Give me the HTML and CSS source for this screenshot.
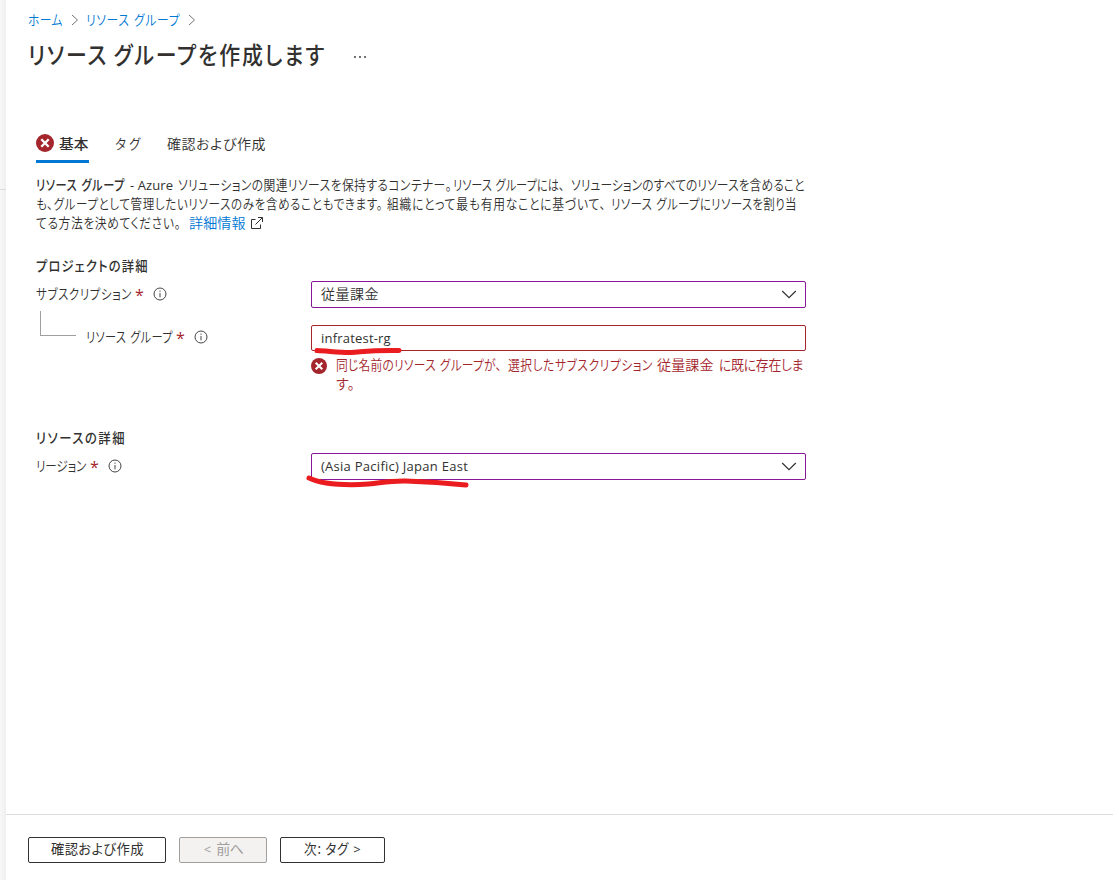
FILE: index.html
```
<!DOCTYPE html>
<html lang="ja">
<head>
<meta charset="utf-8">
<title>リソース グループを作成します</title>
<link rel="stylesheet" href="styles.css">
</head>
<body>
<div class="app">
  <aside class="rail"></aside>
  <div class="blade">
    <header class="head">
      <nav class="crumbs">
        <a class="seg c-home">ホーム</a>
        <svg class="crumb-arrow" width="8" height="12" viewBox="0 0 8 12"><path d="M1 1l5.500 5L1 11"/></svg>
        <a class="seg c-rg">リソース グループ</a>
        <svg class="crumb-arrow" width="8" height="12" viewBox="0 0 8 12"><path d="M1 1l5.500 5L1 11"/></svg>
      </nav>
      <div class="title-row">
        <h1 class="seg c-title">リソース グループを作成します</h1>
        <svg class="more" width="14" height="4" viewBox="0 0 14 4"><circle cx="2" cy="2" r=".9"/><circle cx="7" cy="2" r=".9"/><circle cx="12" cy="2" r=".9"/></svg>
      </div>
    </header>

    <main class="content">
      <div class="tabs">
        <div class="tab active">
          <svg class="err" width="18" height="18" viewBox="0 0 18 18"><circle cx="9" cy="9" r="9"/><path d="M5.300 5.300l7.400 7.400M12.700 5.300l-7.400 7.400"/></svg>
          <span class="seg c-basic">基本</span>
        </div>
        <div class="tab"><span class="seg c-tag">タグ</span></div>
        <div class="tab"><span class="seg c-review">確認および作成</span></div>
      </div>

      <div class="desc">
        <div class="line"><b class="seg d-1">リソース グループ</b><span class="latin d-azure">- Azure</span><span class="seg d-2">ソリューションの関連リソースを保持するコンテナー。</span><span class="seg d-3">リソース グループには、</span><span class="seg d-4">ソリューションのすべてのリソースを含めること</span></div>
        <div class="line"><span class="seg d-5">も、グループとして管理したいリソースのみを含めることもできます。</span><span class="seg d-6">組織にとって最も有用なことに基づいて、</span><span class="seg d-7">リソース グループにリソースを割り当</span></div>
        <div class="line"><span class="seg d-8">てる方法を決めてください。</span><a class="seg d-9">詳細情報</a><svg class="ext" width="13" height="13" viewBox="0 0 13 13"><path d="M5.500 2.500h-4v9h9v-4M8 .5h4.500V5M12.300.7L5.500 7.500"/></svg></div>
      </div>

      <h2 class="section"><span class="seg s-project">プロジェクトの詳細</span></h2>
      <div class="row">
        <div class="label"><span class="seg l-sub">サブスクリプション</span><span class="req">*</span><svg class="info" width="14" height="14" viewBox="0 0 14 14"><circle cx="7" cy="7" r="6"/><path d="M7 6v4.300M7 3.600v1.200"/></svg></div>
        <div class="field select"><span class="seg f-sub">従量課金</span><svg class="chev" width="16" height="9" viewBox="0 0 16 9"><path d="M1.200 1L8 7.600 14.800 1"/></svg></div>
      </div>
      <div class="row rg">
        <div class="label"><span class="elbow"></span><span class="seg l-rg">リソース グループ</span><span class="req">*</span><svg class="info" width="14" height="14" viewBox="0 0 14 14"><circle cx="7" cy="7" r="6"/><path d="M7 6v4.300M7 3.600v1.200"/></svg></div>
        <div class="field invalid"><span class="latin v-rg">infratest-rg</span>
          <svg class="mark mark-rg" width="90" height="10" viewBox="0 0 90 10"><path d="M4 4.500C15 5 28 6.800 38 6.500S55 4 86 4.500"/></svg>
        </div>
      </div>
      <div class="error">
        <svg class="err" width="16" height="16" viewBox="0 0 18 18"><circle cx="9" cy="9" r="9"/><path d="M5.300 5.300l7.400 7.400M12.700 5.300l-7.400 7.400"/></svg>
        <div class="error-text">
          <div class="line"><span class="seg e-1">同じ名前のリソース グループが、</span><span class="seg e-2">選択したサブスクリプション</span><span class="seg e-3">従量課金</span><span class="seg e-4">に既に存在しま</span></div>
          <div class="line"><span class="seg e-5">す。</span></div>
        </div>
      </div>

      <h2 class="section second"><span class="seg s-res">リソースの詳細</span></h2>
      <div class="row">
        <div class="label"><span class="seg l-region">リージョン</span><span class="req">*</span><svg class="info" width="14" height="14" viewBox="0 0 14 14"><circle cx="7" cy="7" r="6"/><path d="M7 6v4.300M7 3.600v1.200"/></svg></div>
        <div class="field select"><span class="latin v-region">(Asia Pacific) Japan East</span><svg class="chev" width="16" height="9" viewBox="0 0 16 9"><path d="M1.200 1L8 7.600 14.800 1"/></svg>
          <svg class="mark mark-region" width="166" height="16" viewBox="0 0 166 16"><path d="M4 4C16 10 38 11 55 10.500S82 6.500 101 7 138 8.500 161 11"/></svg>
        </div>
      </div>
    </main>

    <footer class="actions">
      <button class="btn b-review"><span class="seg">確認および作成</span></button>
      <button class="btn b-prev" disabled><span class="latin">&lt;</span><span class="seg">前へ</span></button>
      <button class="btn b-next"><span class="seg">次: タグ</span><span class="latin">&gt;</span></button>
    </footer>
  </div>
</div>
</body>
</html>
```
FILE: styles.css
```
* { box-sizing: border-box; }

body {
  margin: 0;
  background: #fff;
  color: #323130;
  font: 350 14px/19px "Noto Sans CJK JP", sans-serif;
}

.app { display: flex; height: 880px; overflow: hidden; }
.rail {
  width: 6px;
  flex: none;
  background: linear-gradient(#dcdcdc, #dcdcdc) 0 189px / 6px 1px no-repeat, linear-gradient(90deg, #f8f8f8, #efefef);
}
.blade { flex: 1; display: flex; flex-direction: column; min-width: 0; }

/* Condensed Japanese text run: --w is the run's drawn width, --s its horizontal scale */
.seg {
  --s: .84;
  --w: 50;
  display: inline-block;
  flex: none;
  width: calc(var(--w) * 1px / var(--s));
  margin-right: calc(var(--w) * 1px - var(--w) * 1px / var(--s));
  transform: translateY(-1px) scaleX(var(--s));
  transform-origin: 0 0;
  white-space: nowrap;
  text-align: justify;
  text-align-last: justify;
  font-feature-settings: "palt";
  letter-spacing: -.04em;
  word-spacing: .1em;
}
.latin { flex: none; font-family: "Open Sans", "Noto Sans", sans-serif; font-size: 13px; font-weight: 400; white-space: nowrap; }
a { color: #0078d4; }

.head { height: 120px; flex: none; padding: 10px 0 0 22px; }
.crumbs { display: flex; align-items: center; height: 20px; }
.crumb-arrow { fill: none; stroke: #75736f; stroke-width: 1; margin: 0 7px 0 9px; }
.c-home { --w: 34; }
.c-rg { --w: 93; }
.title-row { display: flex; align-items: center; height: 36px; margin-top: 7px; }
h1 { margin: 0; font-size: 24px; line-height: 36px; font-weight: 500; }
.c-title { --w: 295; --s: .87; letter-spacing: -.06em; word-spacing: -.05em; }
.more { margin: 4px 0 0 30px; fill: #323130; }

.content { flex: 1; padding-left: 30px; }
.tabs { display: flex; gap: 26px; height: 43px; }
.tab { display: flex; height: 43px; padding-top: 15px; }
.tab.active { font-weight: 500; border-bottom: 3px solid #0078d4; width: 53px; gap: 5px; }
.err { flex: none; fill: #a4262c; }
.err path { stroke: #fff; stroke-width: 2.300; }
.tab .err { margin-top: -1px; }
.c-basic { --w: 29; --s: 1.05; }
.c-tag { --w: 25; --s: .9; }
.c-review { --w: 98; --s: 1; margin-left: 1px; }

.desc { margin-top: 13px; height: 57px; }
.line { display: flex; height: 19px; }
.d-1 { --w: 88; --s: .8; font-weight: 500; }
.d-azure { margin: 0 5px 0 6px; width: 43px; letter-spacing: .1px; }
.d-2 { --w: 273; }
.d-3 { --w: 111; --s: .8; margin-left: 2px; }
.d-4 { --w: 233; margin-left: 7px; }
.d-5 { --w: 346; --s: .82; }
.d-6 { --w: 218; margin-left: 5px; }
.d-7 { --w: 185; --s: .82; margin-left: 6px; }
.d-8 { --w: 144; }
.d-9 { --w: 56; --s: 1; margin-left: 9px; }
.ext { margin: 3px 0 0 5px; fill: none; stroke: #323130; }

.section { margin: 24px 0 0; height: 19px; font-size: 14px; line-height: 19px; font-weight: 500; display: flex; }
.s-project { --w: 111; --s: .88; }
.s-res { --w: 88; --s: .88; }
.row { display: flex; height: 27px; margin-top: 5px; }
.label { width: 275px; flex: none; display: flex; align-items: center; }
.l-sub { --w: 95; --s: .82; }
.l-rg { --w: 86; --s: .8; }
.l-region { --w: 50; --s: .82; }
.req { color: #a4262c; font: 16px/19px "Open Sans", sans-serif; margin: 1px 0 0 4px; width: 8px; }
.info { margin: -1px 0 0 10px; fill: none; stroke: #323130; stroke-width: .9; }
.elbow { width: 36px; height: 25px; margin: -28px 10px 0 4px; border: solid #a19f9d; border-width: 0 0 1px 1px; }
.field {
  position: relative;
  width: 495px;
  display: flex;
  align-items: center;
  justify-content: space-between;
  padding: 0 8px 0 9px;
  border: 1px solid #881798;
  border-radius: 2px;
}
.field.invalid { border-color: #a4262c; height: 26px; }
.f-sub { --w: 57; --s: 1; }
.v-rg { letter-spacing: .2px; }
.v-region { letter-spacing: .27px; }
.chev { fill: none; stroke: #323130; stroke-width: 1.200; }
.rg { margin-top: 17px; }
.rg .label { height: 25px; }
.mark { position: absolute; fill: none; stroke: #ea1c1f; stroke-width: 5; stroke-linecap: round; stroke-linejoin: round; }
.mark-rg { left: 1px; top: 20px; }
.mark-region { left: -7px; top: 20px; }

.error { display: flex; gap: 9px; margin: 4px 0 0 275px; height: 40px; color: #a4262c; }
.error .err { margin-top: 2px; }
.e-1 { --w: 165; }
.e-2 { --w: 144; margin-left: 7px; }
.e-3 { --w: 56; --s: 1; margin-left: 5px; }
.e-4 { --w: 84; margin-left: 6px; --s: .92; }
.e-5 { --w: 18; --s: 1; }
.section.second { margin-top: 33px; }

.actions { height: 66px; flex: none; display: flex; gap: 13px; padding: 22px 0 0 22px; border-top: 1px solid #dcdcdc; }
.btn {
  display: flex;
  justify-content: center;
  gap: 5px;
  height: 26px;
  padding: 2px 0;
  background: #fff;
  border: 1px solid #323130;
  border-radius: 2px;
  color: #323130;
  font: 14px/19px "Noto Sans CJK JP", sans-serif;
}
.b-review { width: 138px; }
.b-review .seg { --w: 92; --s: .95; }
.b-prev { width: 88px; background: #f3f2f1; border-color: #a19f9d; color: #a19f9d; }
.b-prev .seg { --w: 26; --s: 1; }
.b-next { width: 105px; }
.b-next .seg { --w: 44; --s: .9; }
```
